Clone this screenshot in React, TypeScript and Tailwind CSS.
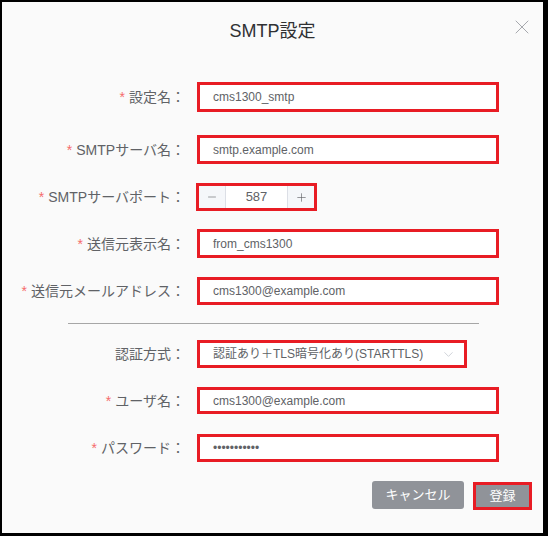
import { X, ChevronDown, Minus, Plus } from 'lucide-react';

const font = { fontFamily: '"Liberation Sans", "Noto Sans CJK JP", sans-serif' };

type RowProps = {
  label: string;
  required?: boolean;
  className?: string;
  children: React.ReactNode;
};

const Row = ({ label, required = true, className = '', children }: RowProps) => (
  <div className={`flex items-center ${className}`}>
    <div className="w-[183px] shrink-0 text-right text-[14px] leading-none text-[#606266]">
      {required && <span className="mr-[4px] text-[#f56c6c]">*</span>}
      {label}：
    </div>
    <div className="ml-[12px]">{children}</div>
  </div>
);

const TextBox = ({ value, h = 'h-[29px]' }: { value: string; h?: string }) => (
  <div
    className={`flex w-[302px] ${h} items-center border-[3px] border-[#e81c24] bg-white pl-[13px] text-[12px] text-[#606266]`}
  >
    {value}
  </div>
);

export default function App() {
  return (
    <div className="h-[536px] w-[548px] bg-black pt-[2px] pr-[5px] pb-[3px] pl-[2px]" style={font}>
      <div className="relative flex h-full flex-col bg-[#fafafa]">
        {/* header */}
        <div className="pt-[19px] text-center text-[18px] leading-[20px] text-[#303133]">SMTP設定</div>
        <X size={24} strokeWidth={0.8} className="absolute top-[13px] right-[9px] text-[#909399]" />

        {/* form */}
        <Row label="設定名" className="mt-[41px]">
          <TextBox value="cms1300_smtp" h="h-[30px]" />
        </Row>
        <Row label="SMTPサーバ名" className="mt-[23px]">
          <TextBox value="smtp.example.com" />
        </Row>
        <Row label="SMTPサーバポート" className="mt-[19px]">
          <div className="-ml-[1px] flex h-[28px] w-[121px] border-[3px] border-[#e81c24] bg-white text-[13px] text-[#606266]">
            <div className="flex w-[27px] items-center justify-center border-r border-[#dcdfe6] bg-[#f5f7fa]">
              <Minus size={12} strokeWidth={1.2} className="text-[#606266]" />
            </div>
            <div className="flex flex-1 items-center justify-center">587</div>
            <div className="flex w-[27px] items-center justify-center border-l border-[#dcdfe6] bg-[#f5f7fa]">
              <Plus size={13} strokeWidth={1.2} className="text-[#606266]" />
            </div>
          </div>
        </Row>
        <Row label="送信元表示名" className="mt-[18px]">
          <TextBox value="from_cms1300" />
        </Row>
        <Row label="送信元メールアドレス" className="mt-[19px]">
          <TextBox value="cms1300@example.com" h="h-[28px]" />
        </Row>

        <div className="mt-[18px] ml-[66px] h-px w-[411px] bg-[#a6a6a6]" />

        <Row label="認証方式" required={false} className="mt-[16px]">
          <div className="flex h-[28px] w-[270px] items-center justify-between border-[3px] border-[#e81c24] bg-white pr-[8px] pl-[13px] text-[12px] text-[#606266]">
            <span>認証あり＋TLS暗号化あり(STARTTLS)</span>
            <ChevronDown size={15} strokeWidth={1.2} className="text-[#c0c4cc]" />
          </div>
        </Row>
        <Row label="ユーザ名" className="mt-[19px]">
          <TextBox value="cms1300@example.com" h="h-[27px]" />
        </Row>
        <Row label="パスワード" className="mt-[20px]">
          <TextBox value="•••••••••••" h="h-[28px]" />
        </Row>

        {/* footer */}
        <div className="mt-[19px] flex justify-end gap-[9px] pr-[11px]">
          <button className="h-[28px] w-[92px] rounded-[3px] bg-[#909399] text-[13px] text-white">キャンセル</button>
          <button className="mt-[1px] h-[28px] w-[59px] border-[3px] border-[#e81c24] bg-[#909399] text-[13px] text-white">
            登録
          </button>
        </div>
      </div>
    </div>
  );
}
